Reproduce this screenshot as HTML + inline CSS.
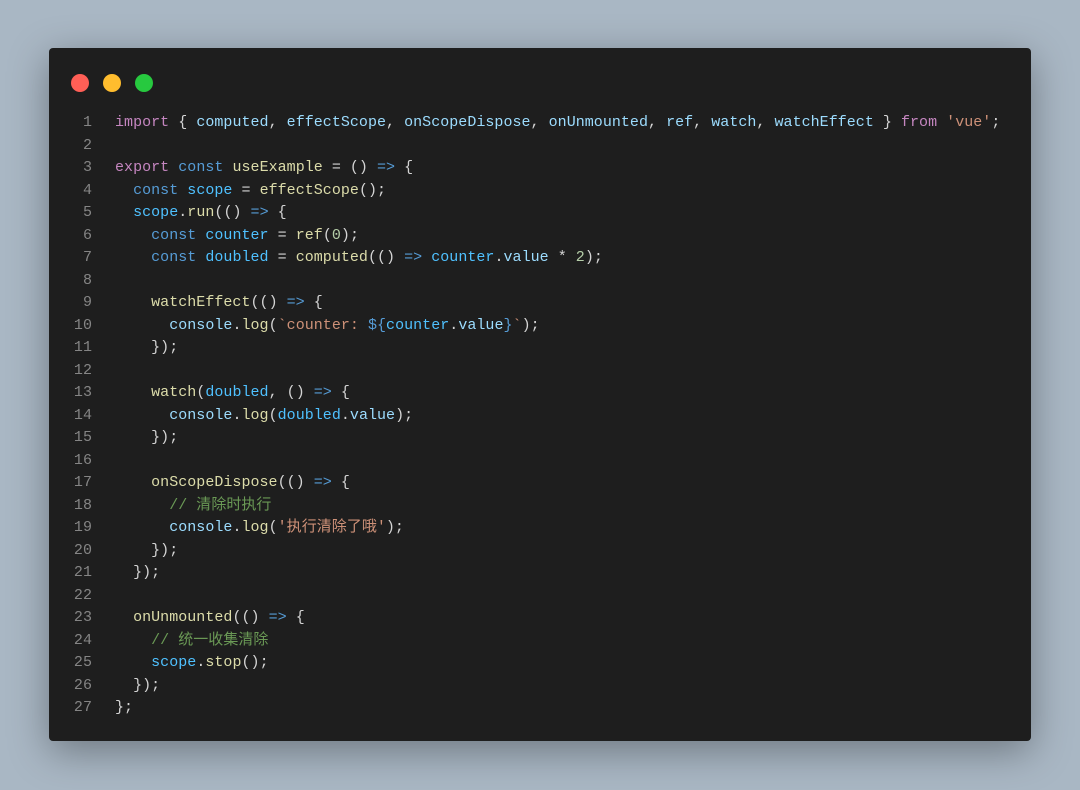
<!DOCTYPE html>
<html><head><meta charset="utf-8"><style>
html,body{margin:0;padding:0;width:1080px;height:790px;overflow:hidden;background:#a9b7c4;}
.win{position:absolute;left:49px;top:48px;width:982px;height:693px;background:#1e1e1e;border-radius:4px;box-shadow:0 10px 40px rgba(0,0,0,.35);}
.dot{position:absolute;top:26px;width:18px;height:18px;border-radius:50%;}
pre{position:absolute;left:0;top:64px;margin:0;font-family:"Liberation Mono","Noto Sans CJK SC",monospace;font-size:15px;line-height:22.5px;letter-spacing:0.03px;color:#d4d4d4;}
.n{display:inline-block;width:43px;text-align:right;color:#858585;margin-right:23px;}
.k{color:#c586c0}.b{color:#569cd6}.f{color:#dcdcaa}.v{color:#9cdcfe}.c{color:#4fc1ff}.s{color:#ce9178}.m{color:#6a9955}.d{color:#b5cea8}
</style></head><body>
<div class="win">
<div class="dot" style="left:22px;background:#ff5f56"></div>
<div class="dot" style="left:54px;background:#ffbd2e"></div>
<div class="dot" style="left:86px;background:#27c93f"></div>
<pre>
<span class="n">1</span><span class="k">import</span> { <span class="v">computed</span>, <span class="v">effectScope</span>, <span class="v">onScopeDispose</span>, <span class="v">onUnmounted</span>, <span class="v">ref</span>, <span class="v">watch</span>, <span class="v">watchEffect</span> } <span class="k">from</span> <span class="s">'vue'</span>;
<span class="n">2</span>
<span class="n">3</span><span class="k">export</span> <span class="b">const</span> <span class="f">useExample</span> = () <span class="b">=&gt;</span> {
<span class="n">4</span>  <span class="b">const</span> <span class="c">scope</span> = <span class="f">effectScope</span>();
<span class="n">5</span>  <span class="c">scope</span>.<span class="f">run</span>(() <span class="b">=&gt;</span> {
<span class="n">6</span>    <span class="b">const</span> <span class="c">counter</span> = <span class="f">ref</span>(<span class="d">0</span>);
<span class="n">7</span>    <span class="b">const</span> <span class="c">doubled</span> = <span class="f">computed</span>(() <span class="b">=&gt;</span> <span class="c">counter</span>.<span class="v">value</span> * <span class="d">2</span>);
<span class="n">8</span>
<span class="n">9</span>    <span class="f">watchEffect</span>(() <span class="b">=&gt;</span> {
<span class="n">10</span>      <span class="v">console</span>.<span class="f">log</span>(<span class="s">`counter: </span><span class="b">${</span><span class="c">counter</span>.<span class="v">value</span><span class="b">}</span><span class="s">`</span>);
<span class="n">11</span>    });
<span class="n">12</span>
<span class="n">13</span>    <span class="f">watch</span>(<span class="c">doubled</span>, () <span class="b">=&gt;</span> {
<span class="n">14</span>      <span class="v">console</span>.<span class="f">log</span>(<span class="c">doubled</span>.<span class="v">value</span>);
<span class="n">15</span>    });
<span class="n">16</span>
<span class="n">17</span>    <span class="f">onScopeDispose</span>(() <span class="b">=&gt;</span> {
<span class="n">18</span>      <span class="m">// 清除时执行</span>
<span class="n">19</span>      <span class="v">console</span>.<span class="f">log</span>(<span class="s">'执行清除了哦'</span>);
<span class="n">20</span>    });
<span class="n">21</span>  });
<span class="n">22</span>
<span class="n">23</span>  <span class="f">onUnmounted</span>(() <span class="b">=&gt;</span> {
<span class="n">24</span>    <span class="m">// 统一收集清除</span>
<span class="n">25</span>    <span class="c">scope</span>.<span class="f">stop</span>();
<span class="n">26</span>  });
<span class="n">27</span>};
</pre>
</div>
</body></html>
